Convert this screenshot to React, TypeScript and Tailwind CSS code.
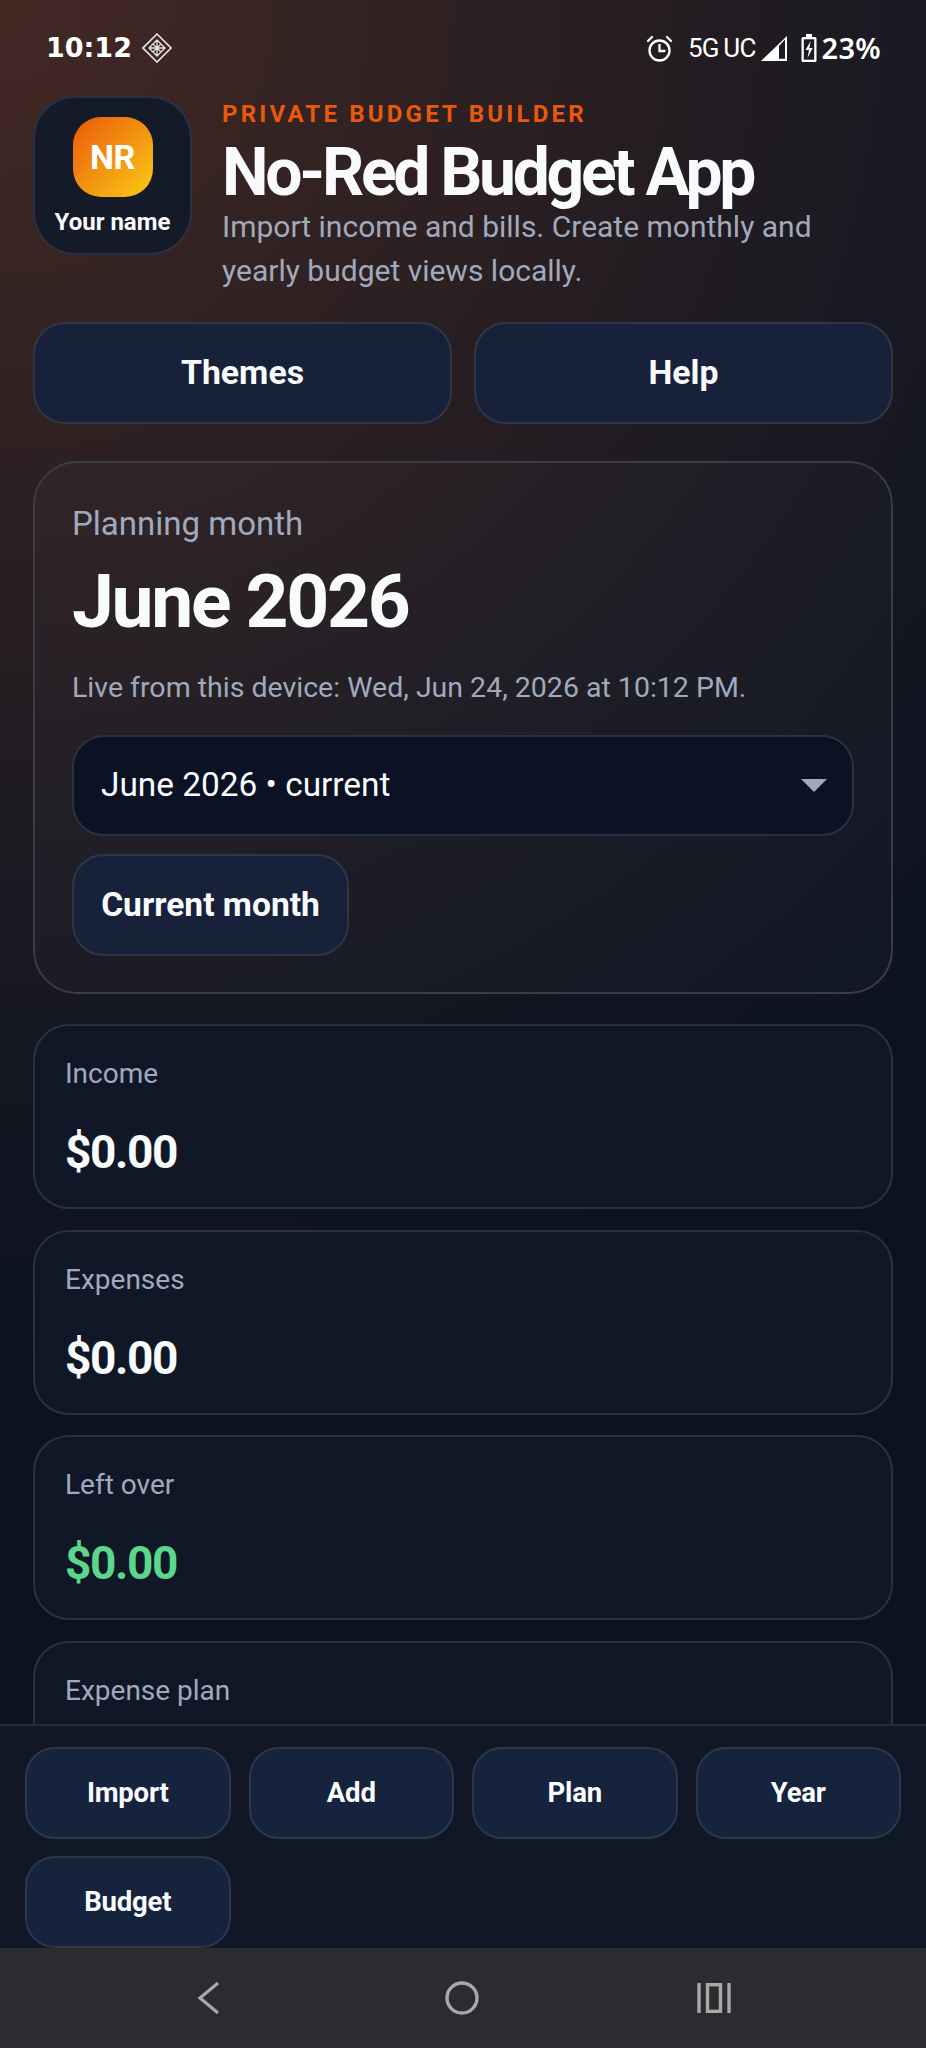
const tabs = ["Import", "Add", "Plan", "Year", "Budget"];

const stats = [
  { label: "Income", value: "$0.00", color: "text-[#f8fafc]" },
  { label: "Expenses", value: "$0.00", color: "text-[#f8fafc]" },
  { label: "Left over", value: "$0.00", color: "text-[#5bd68a]" },
];

function StatusBar() {
  return (
    <div className="flex h-[96px] shrink-0 items-start justify-between pl-[46px] pr-[45px] pt-[33px] text-white">
      <div className="flex items-center gap-[10px]">
        <span className="font-['DejaVu_Sans'] text-[27px] leading-[30px] font-bold">10:12</span>
        <svg width="30" height="30" viewBox="0 0 30 30" fill="none" stroke="#e7e5e4" strokeWidth="1.6">
          <path d="M15 1 29 15 15 29 1 15Z" />
          <path d="M15 7 23 15 15 23 7 15Z M11 11 19 19 M19 11 11 19 M15 7V23 M7 15H23" strokeWidth="1.3" />
        </svg>
      </div>
      <div className="flex items-center">
        <svg width="27" height="27" viewBox="0 0 27 27" fill="none" stroke="white" strokeWidth="2.3" strokeLinecap="round">
          <circle cx="13.5" cy="15.5" r="10" />
          <path d="M13.5 10v6h5M2 6l4-4M25 6l-4-4" />
        </svg>
        <span className="ml-[15px] font-['Roboto'] text-[26px] leading-[30px] tracking-[-1px]">5G</span>
        <span className="ml-[5px] font-['Roboto'] text-[26px] leading-[30px] tracking-[-0.8px]">UC</span>
        <svg width="26" height="25" viewBox="0 0 26 25" className="ml-[5px]">
          <path d="M26 0V25H0Z" fill="white" />
          <path d="M18 10V22.8H24V3.6Z" fill="#1f1a22" />
        </svg>
        <svg width="16" height="28" viewBox="0 0 16 28" className="ml-[14px]">
          <path d="M5 0h6v3h3a1.5 1.5 0 0 1 1.5 1.5v22A1.5 1.5 0 0 1 14 28H2a1.5 1.5 0 0 1-1.5-1.5v-22A1.5 1.5 0 0 1 2 3h3Z" fill="white" />
          <rect x="2.8" y="5.3" width="10.4" height="20.4" fill="#1d1a24" />
          <path d="M9.8 7 4.5 16H8l-1.5 8 5.2-10H8.3Z" fill="white" />
        </svg>
        <span className="ml-[5px] font-['Noto_Sans'] text-[29px] leading-[30px] font-semibold tracking-[0.3px]">23%</span>
      </div>
    </div>
  );
}

function Header() {
  return (
    <div className="flex gap-[30px]">
      <div className="flex h-[159px] w-[159px] shrink-0 flex-col items-center rounded-[42px] border-2 border-[#2a3142] bg-[#141a28] pt-[19px]">
        <div className="flex h-[80px] w-[80px] items-center justify-center rounded-[28px] bg-[linear-gradient(135deg,#ea580c,#facc15)] text-[34px] leading-none font-bold tracking-[-0.5px] text-white">
          NR
        </div>
        <div className="mt-[10px] text-[24px] leading-[30px] font-bold text-[#f8fafc]">Your name</div>
      </div>
      <div className="min-w-0 pt-[3px] pr-[10px]">
        <div className="text-[24px] leading-[30px] font-bold tracking-[3.2px] text-[#ea580c]">PRIVATE BUDGET BUILDER</div>
        <h1 className="mt-[10px] text-[66px] leading-[68px] font-bold tracking-[-3.3px] text-[#f8fafc]">No-Red Budget App</h1>
        <p className="mt-[-2px] text-[30px] leading-[44px] text-[#a0aabc]">
          Import income and bills. Create monthly and yearly budget views locally.
        </p>
      </div>
    </div>
  );
}

function PlanningCard() {
  return (
    <section className="mt-[37px] rounded-[44px] border-2 border-[#3a3c47] bg-[#ffffff05] px-[37px] pt-[41px] pb-[36px]">
      <div className="text-[33px] leading-[40px] text-[#a0aabc]">Planning month</div>
      <div className="mt-[15px] text-[75px] leading-[84px] font-bold tracking-[-2.3px] text-[#f8fafc]">June 2026</div>
      <p className="mt-[25px] text-[28.5px] leading-[40px] text-[#a0aabc]">Live from this device: Wed, Jun 24, 2026 at 10:12 PM.</p>
      <div className="mt-[27px] flex h-[101px] items-center justify-between rounded-[32px] border-2 border-[#2a3142] bg-[#0a1224] pr-[25px] pl-[27px]">
        <span className="text-[33.4px] text-[#f8fafc]">June 2026 • current</span>
        <span className="h-0 w-0 border-x-[13px] border-t-[13px] border-x-transparent border-t-[#a0aabc]"></span>
      </div>
      <button className="mt-[18px] flex h-[102px] w-[277px] items-center justify-center rounded-[32px] border-2 border-[#2f3648] bg-[#17223a] text-[33.6px] font-bold text-[#f8fafc]">
        Current month
      </button>
    </section>
  );
}

function StatCard({ label, value, color }: { label: string; value: string; color: string }) {
  return (
    <div className="h-[185px] rounded-[36px] border-2 border-[#2a3142] bg-[#101828] px-[30px] pt-[30px]">
      <div className="text-[28px] leading-[36px] text-[#a0aabc]">{label}</div>
      <div className={`mt-[32px] text-[46px] leading-[56px] font-bold tracking-[-1.4px] ${color}`}>{value}</div>
    </div>
  );
}

export default function App() {
  return (
    <div className="flex h-[2048px] w-[926px] flex-col overflow-hidden bg-[#0b1220] font-['Roboto',sans-serif]">
      <div className="flex min-h-0 flex-1 flex-col overflow-hidden bg-[radial-gradient(circle_at_0%_0%,#432924_0%,#2a1f22_28%,#171822_50%,#0b1220_72%)]">
        <StatusBar />
        <main className="min-h-0 flex-1 overflow-hidden px-[33px]">
          <Header />
          <div className="mt-[29px] grid grid-cols-2 gap-[22px]">
            {["Themes", "Help"].map((t) => (
              <button key={t} className="h-[102px] rounded-[32px] border-2 border-[#2f3648] bg-[#17223a] text-[33.8px] font-bold text-[#f8fafc]">
                {t}
              </button>
            ))}
          </div>
          <PlanningCard />
          <div className="mt-[30px] flex flex-col gap-[20.5px]">
            {stats.map((s) => (
              <StatCard key={s.label} {...s} />
            ))}
            <StatCard label="Expense plan" value="" color="" />
          </div>
        </main>
      </div>
      <nav className="grid h-[224px] shrink-0 grid-cols-4 content-start gap-x-[18px] gap-y-[17px] border-t-2 border-[#262e3e] bg-[#101827] px-[25px] pt-[21px]">
        {tabs.map((t) => (
          <button key={t} className="h-[92px] rounded-[30px] border-2 border-[#2f3648] bg-[#15233c] text-[27.5px] font-bold tracking-[-0.2px] text-[#f8fafc]">
            {t}
          </button>
        ))}
      </nav>
      <div className="flex h-[100px] shrink-0 items-center justify-center bg-[#2b2c2f]">
        <svg width="24" height="34" viewBox="0 0 24 34" fill="none" stroke="#a8a8a8" strokeWidth="3.2">
          <path d="M22 2 4 17l18 15" />
        </svg>
        <svg width="34" height="34" viewBox="0 0 34 34" fill="none" stroke="#a8a8a8" strokeWidth="3.4" className="ml-[225px]">
          <circle cx="17" cy="17" r="15" />
        </svg>
        <svg width="34" height="30" viewBox="0 0 34 30" fill="none" stroke="#a8a8a8" strokeWidth="3.4" className="ml-[218px]">
          <path d="M2 0v30M32 0v30" />
          <rect x="10.5" y="1.7" width="13" height="26.6" />
        </svg>
      </div>
    </div>
  );
}
